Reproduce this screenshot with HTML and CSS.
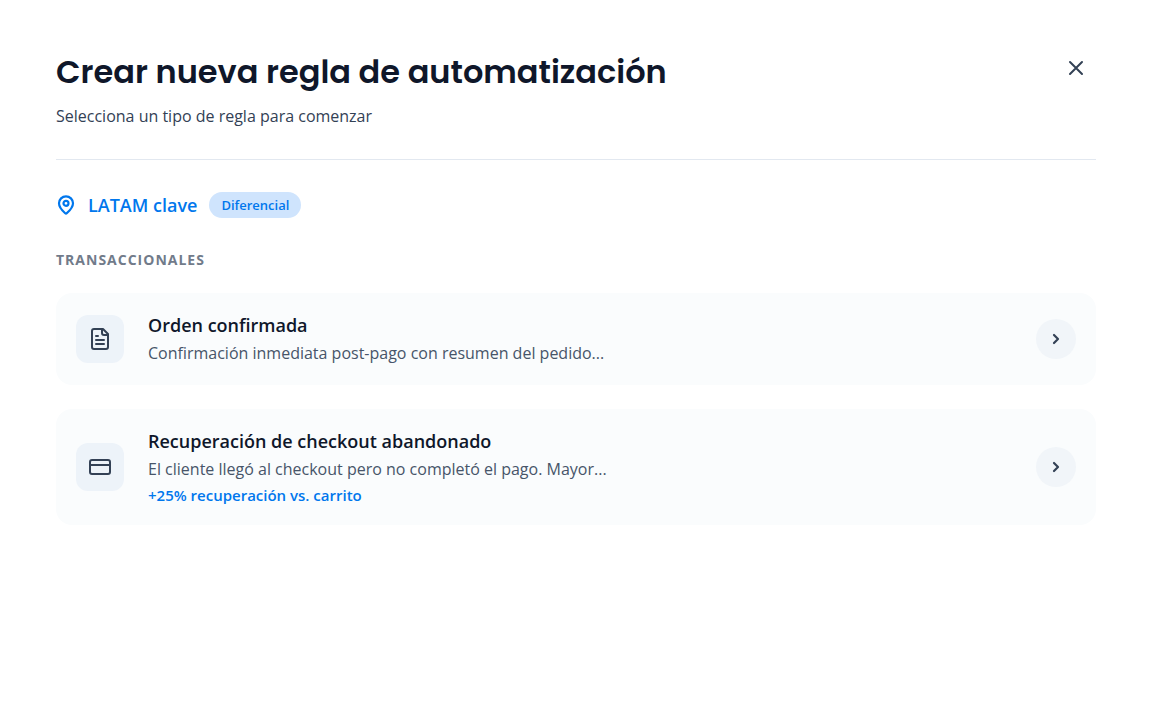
FILE: index.html
```html
<!DOCTYPE html>
<html lang="es">
<head>
  <meta charset="UTF-8" />
  <meta name="viewport" content="width=device-width, initial-scale=1" />
  <title>Crear nueva regla de automatización</title>
  <link rel="stylesheet" href="styles.css">
</head>
<body>
<main class="dialog">

  <!-- Header -->
  <header class="dialog-header">
    <div>
      <h1>Crear nueva regla de automatización</h1>
      <p class="subtitle">Selecciona un tipo de regla para comenzar</p>
    </div>
    <button type="button" class="close-btn" aria-label="Cerrar">
      <svg class="icon" width="24" height="24" viewBox="0 0 24 24"><path d="M18 6 6 18M6 6l12 12"/></svg>
    </button>
  </header>

  <!-- Region -->
  <section class="region">
    <div class="region-title">
      <svg class="icon icon-bold" width="20" height="20" viewBox="0 0 20 20">
        <path d="M17 8.300c0 4.200-4.700 8.600-6.200 9.900a1.200 1.200 0 0 1-1.600 0C7.700 16.900 3 12.500 3 8.300a7 7 0 0 1 14 0Z"/>
        <circle cx="10" cy="8.300" r="2.500"/>
      </svg>
      <h2>LATAM clave</h2>
      <span class="badge">Diferencial</span>
    </div>

    <h3 class="group-label">Transaccionales</h3>

    <div class="rules">
      <button type="button" class="rule">
        <span class="rule-icon">
          <svg class="icon" width="24" height="24" viewBox="0 0 24 24">
            <path d="M15 2H6a2 2 0 0 0-2 2v16a2 2 0 0 0 2 2h12a2 2 0 0 0 2-2V7Z"/>
            <path d="M14 2v4a2 2 0 0 0 2 2h4M8 9h2M8 13h8M8 17h8"/>
          </svg>
        </span>
        <span class="rule-text">
          <span class="rule-name">Orden confirmada</span>
          <span class="rule-desc">Confirmación inmediata post-pago con resumen del pedido...</span>
        </span>
        <span class="rule-arrow">
          <svg class="icon icon-bold" width="16" height="16" viewBox="0 0 16 16"><path d="m6 4 4 4-4 4"/></svg>
        </span>
      </button>

      <button type="button" class="rule">
        <span class="rule-icon">
          <svg class="icon" width="24" height="24" viewBox="0 0 24 24">
            <rect x="2" y="5" width="20" height="14" rx="2"/>
            <path d="M2 10h20"/>
          </svg>
        </span>
        <span class="rule-text">
          <span class="rule-name">Recuperación de checkout abandonado</span>
          <span class="rule-desc">El cliente llegó al checkout pero no completó el pago. Mayor...</span>
          <span class="rule-stat">+25% recuperación vs. carrito</span>
        </span>
        <span class="rule-arrow">
          <svg class="icon icon-bold" width="16" height="16" viewBox="0 0 16 16"><path d="m6 4 4 4-4 4"/></svg>
        </span>
      </button>
    </div>
  </section>

</main>
</body>
</html>
```
FILE: styles.css
```css
* {
  box-sizing: border-box;
}

body {
  margin: 0;
  font-family: "Open Sans", "Noto Sans", sans-serif;
  font-size: 16px;
  line-height: 24px;
  color: #334155;
  background: #fff;
}

h1, h2, h3, p {
  margin: 0;
}

button {
  font: inherit;
  color: inherit;
  border: none;
  cursor: pointer;
}

.icon {
  display: block;
  flex-shrink: 0;
  fill: none;
  stroke: currentColor;
  stroke-width: 2;
  stroke-linecap: round;
  stroke-linejoin: round;
}
.icon-bold {
  stroke-width: 2.2;
}

.dialog {
  padding: 48px 56px;
}

/* Header */
.dialog-header {
  display: flex;
  justify-content: space-between;
  align-items: flex-start;
  padding-bottom: 31px;
  border-bottom: 1px solid #e2e8f0;
}
h1 {
  font-family: Poppins, Inter, sans-serif;
  font-size: 32px;
  font-weight: 600;
  line-height: 48px;
  color: #0f172a;
}
.subtitle {
  margin-top: 8px;
}
.close-btn {
  padding: 8px;
  background: none;
  border-radius: 8px;
}

/* Region heading */
.region {
  padding-top: 32px;
}
.region-title {
  display: flex;
  align-items: center;
  gap: 12px;
  color: #0077ed;
}
h2 {
  font-size: 18px;
  font-weight: 600;
  line-height: 26px;
}
.badge {
  padding: 3px 12px;
  border-radius: 13px;
  background: #cfe4fd;
  font-size: 13px;
  font-weight: 600;
  line-height: 20px;
}
.group-label {
  margin: 32px 0 23px;
  font-size: 14px;
  font-weight: 700;
  line-height: 20px;
  letter-spacing: 1px;
  text-transform: uppercase;
  color: #717b8a;
}

/* Rule cards */
.rules {
  display: grid;
  gap: 24px;
}
.rule {
  display: flex;
  align-items: center;
  gap: 24px;
  padding: 20px;
  border-radius: 16px;
  background: #fafcfd;
  text-align: left;
}
.rule-icon {
  display: grid;
  place-items: center;
  width: 48px;
  height: 48px;
  border-radius: 12px;
  background: #edf3f9;
}
.rule-text {
  display: flex;
  flex: 1;
  flex-direction: column;
  gap: 4px;
}
.rule-name {
  font-size: 18px;
  font-weight: 600;
  color: #0f172a;
}
.rule-desc {
  color: #475569;
}
.rule-stat {
  font-size: 15px;
  font-weight: 600;
  line-height: 20px;
  color: #0077ed;
}
.rule-arrow {
  display: grid;
  place-items: center;
  width: 40px;
  height: 40px;
  border-radius: 50%;
  background: #f1f5f9;
}
```
